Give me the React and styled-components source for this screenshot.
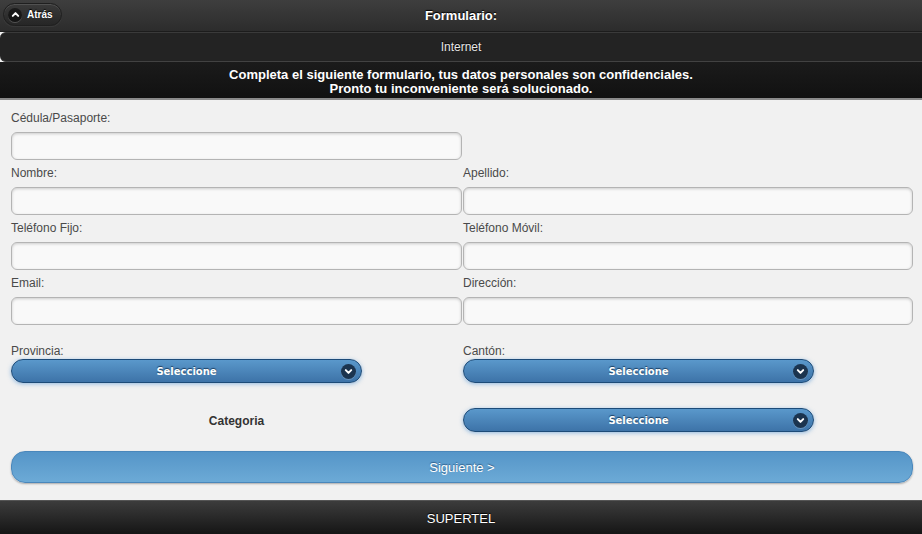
import React from 'react';
import styled, { createGlobalStyle } from 'styled-components';

const Global = createGlobalStyle`
  html, body {
    margin: 0;
    padding: 0;
    background: #f1f1f1;
    font-family: "Liberation Sans", Arial, sans-serif;
  }
`;

const Page = styled.div`
  width: 922px;
  min-height: 534px;
  display: flex;
  flex-direction: column;
  background: #f1f1f1;
`;

const Header = styled.header`
  position: relative;
  height: 31px;
  display: flex;
  align-items: center;
  justify-content: center;
  background: linear-gradient(#3e3e3e, #2c2c2c);
  border-bottom: 1px solid #1c1c1c;
  color: #fff;
  font-size: 13px;
  font-weight: bold;
  text-shadow: 0 -1px 1px #000;
`;

const BackButton = styled.button`
  position: absolute;
  left: 3px;
  top: 3px;
  height: 23px;
  padding: 0 8px 0 4px;
  display: flex;
  align-items: center;
  gap: 5px;
  border-radius: 12px;
  border: 1px solid #1f1f1f;
  background: linear-gradient(#3a3a3a, #262626);
  box-shadow: inset 0 1px 0 rgba(255,255,255,0.12), 0 1px 1px rgba(255,255,255,0.06);
  color: #fff;
  font-family: "Liberation Sans", Arial, sans-serif;
  font-size: 10px;
  font-weight: bold;
  text-shadow: 0 -1px 1px #000;
`;

const IconDot = styled.span`
  width: ${p => p.$size || 14}px;
  height: ${p => p.$size || 14}px;
  border-radius: 50%;
  background: ${p => p.$bg || 'rgba(0,0,0,0.45)'};
  box-shadow: 0 1px 0 rgba(255,255,255,0.2);
  display: flex;
  align-items: center;
  justify-content: center;
`;

const SubBar = styled.div`
  height: 28px;
  display: flex;
  align-items: center;
  justify-content: center;
  background: #232323;
  border-top: 1px solid #3a3a3a;
  border-bottom: 1px solid #424242;
  border-radius: 6px 0 0 6px;
  color: #e6e6e6;
  font-size: 12px;
  text-shadow: 0 -1px 1px #000;
`;

const Notice = styled.div`
  padding: 6px 0 2px;
  height: 28px;
  text-align: center;
  background: linear-gradient(#1b1b1b, #111);
  border-bottom: 2px solid #8a8a8a;
  color: #fff;
  font-size: 13px;
  font-weight: bold;
  line-height: 14px;
`;

const Content = styled.main`
  flex: 1;
  padding: 10px 9px 17px 11px;
  display: flex;
  flex-direction: column;
`;

const Grid = styled.div`
  display: grid;
  grid-template-columns: 451px 450px;
  column-gap: 1px;
`;

const Field = styled.div`
  display: flex;
  flex-direction: column;
  margin-bottom: 5px;
`;

const Label = styled.label`
  height: 16px;
  line-height: 16px;
  margin-bottom: ${p => p.$tight ? 0 : 6}px;
  font-size: 12px;
  color: #4a4a4a;
`;

const Input = styled.input`
  box-sizing: border-box;
  height: 28px;
  width: 100%;
  border: 1px solid #b4b4b4;
  border-radius: 6px;
  background: #f9f9f9;
  box-shadow: inset 0 1px 3px rgba(0,0,0,0.18);
  outline: none;
`;

const SelectRow = styled.div`
  display: grid;
  grid-template-columns: 451px 450px;
  column-gap: 1px;
  margin-top: ${p => p.$gap}px;
`;

const Select = styled.div`
  box-sizing: border-box;
  position: relative;
  width: 351px;
  height: 24px;
  border-radius: 12px;
  border: 1px solid #1d4b78;
  background: linear-gradient(#5a98cb, #3d73a8);
  box-shadow: 0 1px 4px rgba(70,140,210,0.55);
  display: flex;
  align-items: center;
  justify-content: center;
  color: #fff;
  font-family: "DejaVu Sans", Verdana, sans-serif;
  font-size: 10px;
  font-weight: bold;
  text-shadow: 0 -1px 1px #1a3d60;
`;

const SelectIcon = styled(IconDot)`
  position: absolute;
  right: 5px;
  top: 3.5px;
`;

const CategoryLabel = styled.div`
  height: 24px;
  margin-top: 1px;
  display: flex;
  align-items: center;
  justify-content: center;
  width: 451px;
  font-size: 12px;
  font-weight: bold;
  color: #333;
`;

const NextButton = styled.button`
  box-sizing: border-box;
  margin-top: 18px;
  height: 32px;
  width: 902px;
  border-radius: 14px;
  border: 1px solid #4a87bb;
  background: linear-gradient(#5595c8, #6caad6);
  box-shadow: 0 1px 2px rgba(0,0,0,0.3);
  color: #fff;
  font-family: "Liberation Sans", Arial, sans-serif;
  font-size: 13px;
  text-shadow: 0 -1px 1px #2d5e8a;
`;

const Footer = styled.footer`
  height: 34px;
  display: flex;
  align-items: center;
  justify-content: center;
  background: linear-gradient(#3c3c3c, #141414);
  border-top: 1px solid #555;
  color: #fff;
  font-family: "Liberation Sans", Arial, sans-serif;
  font-size: 13px;
  text-shadow: 0 -1px 1px #000;
`;

const Chevron = ({ up }) => (
  <svg width="9" height="9" viewBox="0 0 10 10">
    <path
      d={up ? 'M2 6.5 L5 3.5 L8 6.5' : 'M2 3.5 L5 6.5 L8 3.5'}
      fill="none"
      stroke="#fff"
      strokeWidth="2.2"
      strokeLinecap="round"
      strokeLinejoin="round"
    />
  </svg>
);

const DropDown = () => (
  <Select>
    Seleccione
    <SelectIcon $bg="#1b344f" $size={15}>
      <Chevron />
    </SelectIcon>
  </Select>
);

const fields = [
  ['Nombre:', 'Apellido:'],
  ['Teléfono Fijo:', 'Teléfono Móvil:'],
  ['Email:', 'Dirección:'],
];

export default function App() {
  return (
    <Page>
      <Global />
      <Header>
        <BackButton>
          <IconDot $bg="rgba(0,0,0,0.5)">
            <Chevron up />
          </IconDot>
          Atrás
        </BackButton>
        Formulario:
      </Header>
      <SubBar>Internet</SubBar>
      <Notice>
        Completa el siguiente formulario, tus datos personales son confidenciales.
        <br />
        Pronto tu inconveniente será solucionado.
      </Notice>
      <Content>
        <Grid>
          <Field>
            <Label>Cédula/Pasaporte:</Label>
            <Input />
          </Field>
          <div />
          {fields.map(([a, b]) => (
            <React.Fragment key={a}>
              <Field>
                <Label>{a}</Label>
                <Input />
              </Field>
              <Field>
                <Label>{b}</Label>
                <Input />
              </Field>
            </React.Fragment>
          ))}
        </Grid>
        <SelectRow $gap={13}>
          <Field>
            <Label $tight>Provincia:</Label>
            <DropDown />
          </Field>
          <Field>
            <Label $tight>Cantón:</Label>
            <DropDown />
          </Field>
        </SelectRow>
        <SelectRow $gap={20}>
          <CategoryLabel>Categoria</CategoryLabel>
          <DropDown />
        </SelectRow>
        <NextButton>Siguiente &gt;</NextButton>
      </Content>
      <Footer>SUPERTEL</Footer>
    </Page>
  );
}
